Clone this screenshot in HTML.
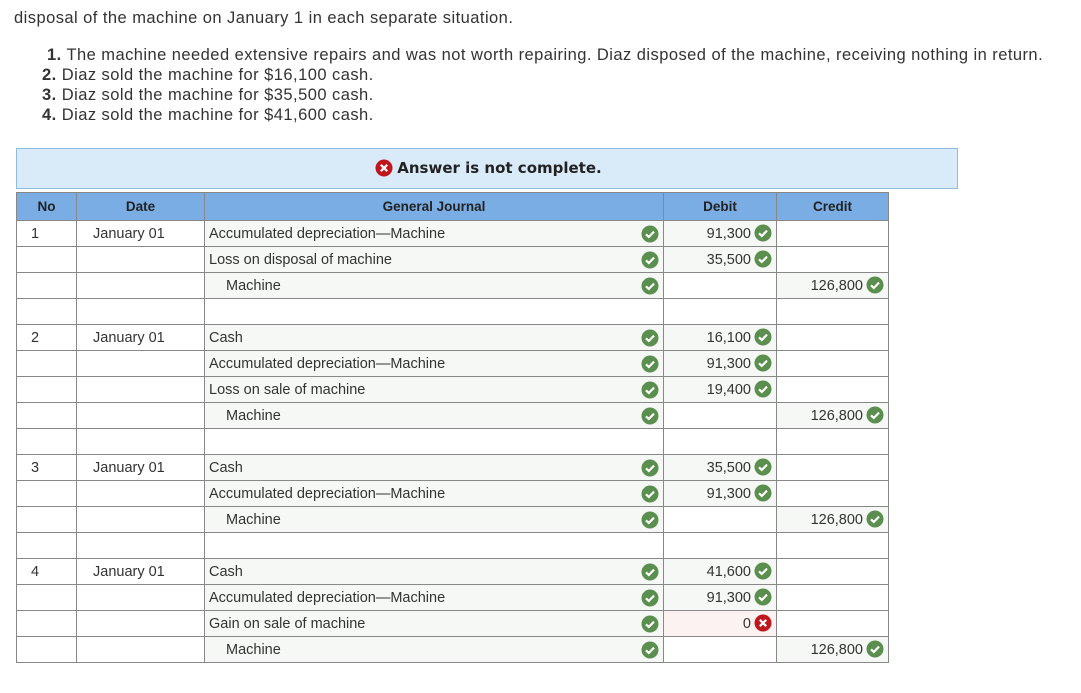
<!DOCTYPE html>
<html><head><meta charset="utf-8"><style>
body{margin:0;background:#fff;font-family:"Liberation Sans",sans-serif;color:#222;width:1081px;height:693px;overflow:hidden;position:relative}
.t{position:absolute;font-size:16.5px;letter-spacing:0.45px;color:#333;white-space:nowrap}
.banner{position:absolute;left:16px;top:148px;width:940px;height:39px;background:#d9ebf9;border:1px solid #8fbde0;text-align:center;font-family:"DejaVu Sans","Liberation Sans",sans-serif;font-weight:bold;font-size:15px;line-height:39px;color:#222}
table{position:absolute;left:16px;top:192px;border-collapse:collapse;table-layout:fixed;font-size:14.5px}
td,th{border:1px solid #888;height:25px;padding:0 4px;overflow:hidden;white-space:nowrap;color:#333}
th{background:#79ade4;height:27px;font-weight:bold;color:#222;font-size:13.5px}
td.d{padding-left:16px}
td.g{background:#f6f8f6}
td.r{text-align:right;padding-right:4px}
td.red{background:#fdf2f2}
.ic{display:inline-block;vertical-align:middle;width:18px;height:18px;margin-left:3px;position:relative;top:-1px}
.gj{position:relative}
.gj .ic{position:absolute;right:4px;top:4px}
</style></head><body>
<div class="t" style="left:14px;top:9px">disposal of the machine on January 1 in each separate situation.</div>
<div class="t" style="left:42px;top:46px"><b>&nbsp;1.</b> The machine needed extensive repairs and was not worth repairing. Diaz disposed of the machine, receiving nothing in return.</div>
<div class="t" style="left:42px;top:66px"><b>2.</b> Diaz sold the machine for $16,100 cash.</div>
<div class="t" style="left:42px;top:86px"><b>3.</b> Diaz sold the machine for $35,500 cash.</div>
<div class="t" style="left:42px;top:106px"><b>4.</b> Diaz sold the machine for $41,600 cash.</div>
<div class="banner"><svg class="ic" viewBox="0 0 18 18" style="margin-right:4px"><circle cx="9" cy="9" r="8.5" fill="#c0161d"/><path d="M5.8 5.8l6.4 6.4M12.2 5.8l-6.4 6.4" stroke="#fff" stroke-width="2.2"/></svg>Answer is not complete.</div>
<svg width="0" height="0" style="position:absolute"><defs>
<symbol id="ok" viewBox="0 0 18 18"><circle cx="9" cy="9" r="8.5" fill="#5b8f4f"/><path d="M5 9.3l2.8 2.7 5.2-5.4" stroke="#fff" stroke-width="2.2" fill="none"/></symbol>
<symbol id="no" viewBox="0 0 18 18"><circle cx="9" cy="9" r="8.5" fill="#c0161d"/><path d="M5.8 5.8l6.4 6.4M12.2 5.8l-6.4 6.4" stroke="#fff" stroke-width="2.2"/></symbol>
</defs></svg>
<table>
<colgroup><col style="width:60px"><col style="width:128px"><col style="width:459px"><col style="width:113px"><col style="width:112px"></colgroup>
<tr><th>No</th><th>Date</th><th>General Journal</th><th>Debit</th><th>Credit</th></tr>
<tr><td style="padding-left:14px">1</td><td class="d">January 01</td><td class="g gj">Accumulated depreciation—Machine<svg class="ic"><use href="#ok"/></svg></td><td class="g r">91,300<svg class="ic"><use href="#ok"/></svg></td><td></td></tr>
<tr><td></td><td></td><td class="g gj">Loss on disposal of machine<svg class="ic"><use href="#ok"/></svg></td><td class="g r">35,500<svg class="ic"><use href="#ok"/></svg></td><td></td></tr>
<tr><td></td><td></td><td class="g gj" style="padding-left:21px">Machine<svg class="ic"><use href="#ok"/></svg></td><td></td><td class="g r">126,800<svg class="ic"><use href="#ok"/></svg></td></tr>
<tr><td></td><td></td><td></td><td></td><td></td></tr>
<tr><td style="padding-left:14px">2</td><td class="d">January 01</td><td class="g gj">Cash<svg class="ic"><use href="#ok"/></svg></td><td class="g r">16,100<svg class="ic"><use href="#ok"/></svg></td><td></td></tr>
<tr><td></td><td></td><td class="g gj">Accumulated depreciation—Machine<svg class="ic"><use href="#ok"/></svg></td><td class="g r">91,300<svg class="ic"><use href="#ok"/></svg></td><td></td></tr>
<tr><td></td><td></td><td class="g gj">Loss on sale of machine<svg class="ic"><use href="#ok"/></svg></td><td class="g r">19,400<svg class="ic"><use href="#ok"/></svg></td><td></td></tr>
<tr><td></td><td></td><td class="g gj" style="padding-left:21px">Machine<svg class="ic"><use href="#ok"/></svg></td><td></td><td class="g r">126,800<svg class="ic"><use href="#ok"/></svg></td></tr>
<tr><td></td><td></td><td></td><td></td><td></td></tr>
<tr><td style="padding-left:14px">3</td><td class="d">January 01</td><td class="g gj">Cash<svg class="ic"><use href="#ok"/></svg></td><td class="g r">35,500<svg class="ic"><use href="#ok"/></svg></td><td></td></tr>
<tr><td></td><td></td><td class="g gj">Accumulated depreciation—Machine<svg class="ic"><use href="#ok"/></svg></td><td class="g r">91,300<svg class="ic"><use href="#ok"/></svg></td><td></td></tr>
<tr><td></td><td></td><td class="g gj" style="padding-left:21px">Machine<svg class="ic"><use href="#ok"/></svg></td><td></td><td class="g r">126,800<svg class="ic"><use href="#ok"/></svg></td></tr>
<tr><td></td><td></td><td></td><td></td><td></td></tr>
<tr><td style="padding-left:14px">4</td><td class="d">January 01</td><td class="g gj">Cash<svg class="ic"><use href="#ok"/></svg></td><td class="g r">41,600<svg class="ic"><use href="#ok"/></svg></td><td></td></tr>
<tr><td></td><td></td><td class="g gj">Accumulated depreciation—Machine<svg class="ic"><use href="#ok"/></svg></td><td class="g r">91,300<svg class="ic"><use href="#ok"/></svg></td><td></td></tr>
<tr><td></td><td></td><td class="g gj">Gain on sale of machine<svg class="ic"><use href="#ok"/></svg></td><td class="red r">0<svg class="ic"><use href="#no"/></svg></td><td></td></tr>
<tr><td></td><td></td><td class="g gj" style="padding-left:21px">Machine<svg class="ic"><use href="#ok"/></svg></td><td></td><td class="g r">126,800<svg class="ic"><use href="#ok"/></svg></td></tr>
</table>
</body></html>
